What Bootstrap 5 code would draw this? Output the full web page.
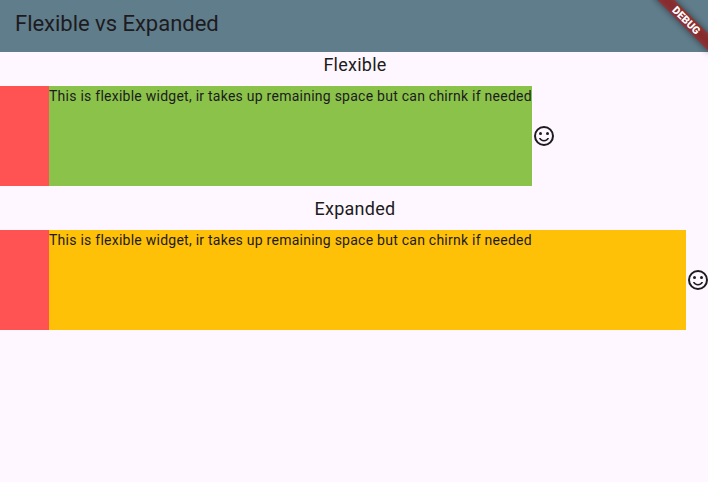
<!DOCTYPE html>
<html lang="en">
<head>
<meta charset="utf-8">
<meta name="viewport" content="width=device-width, initial-scale=1">
<title>Flexible vs Expanded</title>
<link href="https://cdn.jsdelivr.net/npm/bootstrap@5.3.0/dist/css/bootstrap.min.css" rel="stylesheet">
<style>
body{font-family:Roboto,sans-serif;background:#fef7ff;color:#1d1b20;height:100vh}
.app-bar{height:52px;background:#607d8b;padding:0 15px 4px}
.app-title{font-size:22px;line-height:28px;font-weight:400;letter-spacing:-.02px}
.page-body{width:710px}
.section-title{font-size:18px;font-weight:400;line-height:26px;letter-spacing:.25px;margin-bottom:8px}
.demo-row{height:100px;margin-bottom:10px}
.red-box{width:49px;background:#ff5252}
.text-box{font-size:14px;line-height:20px;letter-spacing:.25px;white-space:nowrap}
.green-box{background:#8bc34a;width:482.5px}
.amber-box{background:#ffc107}
.smile{width:24px;height:24px;fill:#1d1b20}
.debug-banner{width:78px;height:72px;top:0;right:0}
.debug-banner text{font:900 10.6px Roboto,sans-serif;letter-spacing:.15px;fill:#fff}
</style>
</head>
<body class="overflow-hidden position-relative">
<header class="app-bar d-flex align-items-center"><h1 class="app-title m-0">Flexible vs Expanded</h1></header>
<main class="page-body">
<section>
<h2 class="section-title text-center">Flexible</h2>
<div class="demo-row d-flex align-items-center">
<div class="red-box h-100 flex-shrink-0"></div>
<div class="text-box green-box h-100">This is flexible widget, ir takes up remaining space but can chirnk if needed</div>
<svg class="smile flex-shrink-0" viewBox="0 0 24 24"><circle cx="15.5" cy="9.5" r="1.5"/><circle cx="8.5" cy="9.5" r="1.5"/><path d="M12 16c-1.480 0-2.750-.81-3.450-2H6.880c.8 2.050 2.790 3.500 5.120 3.500s4.320-1.450 5.120-3.500h-1.670c-.7 1.190-1.970 2-3.450 2zM12 2a10 10 0 1 0 0 20 10 10 0 0 0 0-20zm0 18a8 8 0 1 1 0-16 8 8 0 0 1 0 16z"/></svg>
</div>
</section>
<section>
<h2 class="section-title text-center">Expanded</h2>
<div class="demo-row d-flex align-items-center">
<div class="red-box h-100 flex-shrink-0"></div>
<div class="text-box amber-box h-100 flex-grow-1">This is flexible widget, ir takes up remaining space but can chirnk if needed</div>
<svg class="smile flex-shrink-0" viewBox="0 0 24 24"><circle cx="15.5" cy="9.5" r="1.5"/><circle cx="8.5" cy="9.5" r="1.5"/><path d="M12 16c-1.480 0-2.750-.81-3.450-2H6.880c.8 2.050 2.790 3.500 5.120 3.500s4.320-1.450 5.120-3.500h-1.670c-.7 1.190-1.970 2-3.450 2zM12 2a10 10 0 1 0 0 20 10 10 0 0 0 0-20zm0 18a8 8 0 1 1 0-16 8 8 0 0 1 0 16z"/></svg>
</div>
</section>
</main>
<svg class="debug-banner position-absolute" viewBox="0 0 78 72">
<defs><filter id="bannerShadow" x="-30%" y="-200%" width="160%" height="500%"><feGaussianBlur stdDeviation="3.5"/></filter></defs>
<g transform="translate(80 -4) rotate(45)">
<rect x="-40" y="28" width="80" height="12" fill="#000" fill-opacity=".5" filter="url(#bannerShadow)"/>
<rect x="-40" y="28" width="80" height="12" fill="#b71c1c" fill-opacity=".627"/>
<text x="0.6" y="37.7" text-anchor="middle">DEBUG</text>
</g>
</svg>
<script src="https://cdn.jsdelivr.net/npm/bootstrap@5.3.0/dist/js/bootstrap.bundle.min.js"></script>
</body>
</html>
